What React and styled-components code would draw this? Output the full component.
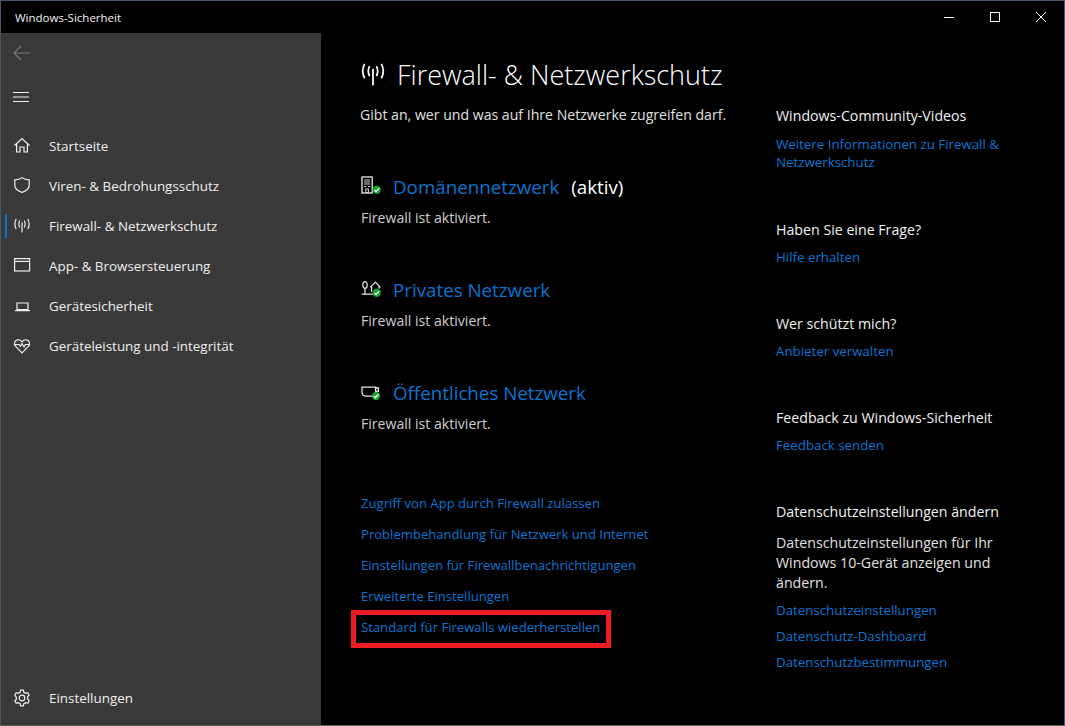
import React from "react";
import styled, { createGlobalStyle } from "styled-components";

const Global = createGlobalStyle`
  html, body { margin: 0; padding: 0; background: #000; }
  body { font-family: "Open Sans", "Noto Sans", sans-serif; }
`;
const Win = styled.div`
  width: 1065px; height: 726px; box-sizing: border-box; display: flex; flex-direction: column;
  background: #000; color: #fff; overflow: hidden;
  border: 1px solid #4a5869; border-bottom-color: #5a5a5a;
`;
const TitleBar = styled.div`
  height: 32px; flex: none; display: flex; align-items: center; justify-content: space-between;
  padding-left: 14px; font-size: 11.5px; color: #f2f2f2;
`;
const Controls = styled.div`display: flex; align-items: center; color: #fff;`;
const Control = styled.div`width: 46px; height: 32px; display: flex; align-items: center; justify-content: center;`;
const Body = styled.div`flex: 1; display: flex; min-height: 0;`;
const Side = styled.nav`
  width: 320px; flex: none; background: #393939; display: flex; flex-direction: column; color: #f0f0f0;
`;
const TopIcon = styled.div`
  height: 40px; display: flex; align-items: center; padding-left: 12px; color: ${p => p.$dim ? "#7a7a7a" : "#f0f0f0"};
  margin-top: ${p => p.$mt || 0}px;
`;
const NavList = styled.div`margin-top: 9px; display: flex; flex-direction: column;`;
const NavItem = styled.div`
  height: 40px; display: flex; align-items: center; position: relative; padding-left: 12px; font-size: 13.4px; gap: 18px;
  ${p => p.$active && `&::before { content: ""; position: absolute; left: 4px; top: 8px; width: 2px; height: 24px; background: #0a74d0; }`}
`;
const NavIcon = styled.span`width: 18px; height: 18px; flex: none; display: flex;`;
const SideFoot = styled.div`margin-top: auto; margin-bottom: 7px;`;
const Main = styled.main`flex: 1; display: flex; min-width: 0;`;
const Center = styled.section`width: 454px; flex: none; padding: 22px 0 0 39px; box-sizing: border-box;`;
const TitleRow = styled.div`display: flex; align-items: center; height: 38px; gap: 11px;`;
const Title = styled.h1`margin: 0; font-size: 27px; font-weight: 300; color: #fff; white-space: nowrap;`;
const Subtitle = styled.p`margin: 12px 0 0; font-size: 14.1px; line-height: 20px; height: 20px; color: #e0e0e0; white-space: nowrap;`;
const Network = styled.div`margin-top: ${p => p.$mt}px;`;
const NetHead = styled.div`display: flex; align-items: center; height: 30px; padding-left: 1px; gap: 12px;`;
const NetIcon = styled.span`width: 20px; height: 20px; flex: none; display: flex;`;
const NetName = styled.span`font-size: 18.75px; color: #0a74d0; white-space: nowrap;`;
const NetState = styled.span`font-size: 18.75px; color: #fff; white-space: nowrap;`;
const NetSub = styled.div`font-size: 14.1px; line-height: 20px; margin-top: 7px; padding-left: 1px; color: #cfcfcf;`;
const Links = styled.div`margin-top: 54px; display: flex; flex-direction: column; padding-left: 1px;`;
const Lnk = styled.a`font-size: 13.1px; line-height: 31px; height: 31px; color: #0a74d0; white-space: nowrap; position: relative; display: block;`;
const Highlight = styled.span`
  position: absolute; left: -10px; top: -2px; width: 250px; height: 28px; border: 5px solid #ed1c24; box-sizing: content-box;
`;
const Right = styled.aside`flex: 1; padding: 73px 0 0 1px; min-width: 0;`;
const Group = styled.div`margin-bottom: ${p => p.$mb}px;`;
const GroupTitle = styled.h2`margin: 0 0 ${p => p.$mb ?? 8}px; font-size: 14.2px; line-height: 20px; font-weight: 400; color: #f2f2f2; white-space: nowrap;`;
const RLink = styled.a`display: block; font-size: 13.3px; line-height: ${p => p.$lh || 18}px; color: #0a74d0; white-space: nowrap;`;
const Para = styled.p`margin: 0 0 4px; font-size: 14.2px; line-height: 20px; color: #e0e0e0; white-space: nowrap;`;

const S = { fill: "none", stroke: "currentColor", strokeWidth: 1.2 };
const Antenna = ({ size = 18 }) => (
  <svg width={size} height={size} viewBox="0 0 18 18" {...S}>
    <path d={size > 18 ? "M9 5.5V17" : "M9 5.5V15.5"} />
    <path d="M6.6 3.6C5.4 6 5.4 8 6.6 10.4M11.4 3.6C12.6 6 12.6 8 11.4 10.4" />
    <path d="M3.2 2C1.4 5.4 1.4 8.6 3.2 12M14.8 2C16.6 5.4 16.6 8.6 14.8 12" />
  </svg>
);
const Check = ({ x, y }) => (
  <g>
    <circle cx={x} cy={y} r="4.2" fill="#16a02c" stroke="none" />
    <path d={`M${x - 2.2} ${y + .2}L${x - .6} ${y + 1.8}L${x + 2.4} ${y - 1.6}`} fill="none" stroke="#fff" strokeWidth="1.4" />
  </g>
);

const icons = {
  home: <svg width="18" height="18" viewBox="0 0 18 18" {...S}><path d="M1.5 8.5L9 1.5L16.5 8.5M3.6 7V15H7V10H11V15H14.4V7" /></svg>,
  shield: <svg width="18" height="18" viewBox="0 0 18 18" {...S}><path d="M9 .6C7 2.3 4.5 2.9 1.8 2.9V8C1.8 11.6 4.8 14 9 15.4C13.2 14 16.2 11.6 16.2 8V2.9C13.5 2.9 11 2.3 9 .6Z" /></svg>,
  antenna: <Antenna />,
  browser: <svg width="18" height="18" viewBox="0 0 18 18" {...S}><rect x="1.6" y="1.6" width="15" height="12.4" /><path d="M1.6 4.4H16.6" /></svg>,
  laptop: <svg width="18" height="18" viewBox="0 0 18 18" {...S}><path d="M4 6H15V12.5H4ZM2 13.6H17" /></svg>,
  heart: <svg width="18" height="18" viewBox="0 0 18 18" {...S}><path d="M9 15.8L2.4 9.2C0.6 7 1.4 3.4 4.6 2.8C6.4 2.5 8 3.4 9 4.8C10 3.4 11.6 2.5 13.4 2.8C16.6 3.4 17.4 7 15.6 9.2Z" /><path d="M1.2 7.5H6L7.4 9.2L9 6.6L11 9.8L12.4 7.5H16.8" /></svg>,
  gear: <svg width="18" height="18" viewBox="0 0 18 18" {...S}><circle cx="9" cy="9" r="2.8" /><path d="M7.6 1.2H10.4L10.9 3.3L12.7 4.3L14.8 3.7L16.2 6.1L14.7 7.6V9.8L16.2 11.9L14.8 14.3L12.7 13.7L10.9 14.7L10.4 16.8H7.6L7.1 14.7L5.3 13.7L3.2 14.3L1.8 11.9L3.3 10.4V8.2L1.8 6.1L3.2 3.7L5.3 4.3L7.1 3.3Z" /></svg>,
};
const nav = [
  ["home", "Startseite"], ["shield", "Viren- & Bedrohungsschutz"], ["antenna", "Firewall- & Netzwerkschutz", true],
  ["browser", "App- & Browsersteuerung"], ["laptop", "Gerätesicherheit"], ["heart", "Geräteleistung und -integrität"],
];
const DomainIcon = () => (
  <NetIcon><svg width="20" height="20" viewBox="0 0 20 20" fill="none">
    <rect x="1" y="1" width="10.2" height="16" fill="#000" stroke="#fff" strokeWidth="1.2" />
    <path d="M3 4H9.2M3 6H9.2M3 8H9.2M3 10.5H5.2M7 10.5H9.2M4.8 13H7.4V16.5H4.8Z" stroke="#d0d0d0" strokeWidth="1.1" />
    <Check x={15.7} y={13.7} />
  </svg></NetIcon>
);
const PrivateIcon = () => (
  <NetIcon><svg width="20" height="20" viewBox="0 0 20 20" fill="none" stroke="#e8e8e8" strokeWidth="1.2">
    <ellipse cx="4" cy="6" rx="2.2" ry="3.4" /><path d="M4 9.5V15M.8 15.2H12" />
    <path d="M9.2 8.4L14.4 3.2L19.4 8.4M10.6 7.4V13M18 7.4V9.5" />
    <Check x={15.7} y={13.7} />
  </svg></NetIcon>
);
const PublicIcon = () => (
  <NetIcon><svg width="20" height="20" viewBox="0 0 20 20" fill="none" stroke="#e8e8e8" strokeWidth="1.3">
    <path d="M1 5.2H14.6V10C14.6 12.6 13 14.2 10.5 14.2H5C2.6 14.2 1 12.6 1 10Z" /><path d="M14.6 6H17.4V9.4H15" />
    <Check x={15} y={14} />
  </svg></NetIcon>
);

export default function App() {
  return (
    <Win>
      <Global />
      <TitleBar>
        <span>Windows-Sicherheit</span>
        <Controls>
          <Control><svg width="10" height="10" viewBox="0 0 10 10"><path d="M0 5.5H10" stroke="#fff" /></svg></Control>
          <Control><svg width="10" height="10" viewBox="0 0 10 10"><rect x=".5" y=".5" width="9" height="9" fill="none" stroke="#fff" /></svg></Control>
          <Control><svg width="10" height="10" viewBox="0 0 10 10"><path d="M0 0L10 10M10 0L0 10" stroke="#fff" /></svg></Control>
        </Controls>
      </TitleBar>
      <Body>
        <Side>
          <TopIcon $dim>
            <svg width="17" height="16" viewBox="0 0 17 16" fill="none" stroke="currentColor" strokeWidth="1.2"><path d="M8 .8L1 8L8 15.2M1 8H17" /></svg>
          </TopIcon>
          <TopIcon $mt={4}>
            <svg width="16" height="10" viewBox="0 0 16 10" stroke="currentColor"><path d="M0 .5H16M0 5H16M0 9.5H16" /></svg>
          </TopIcon>
          <NavList>
            {nav.map(([k, t, a]) => (
              <NavItem key={k} $active={a}><NavIcon>{icons[k]}</NavIcon><span>{t}</span></NavItem>
            ))}
          </NavList>
          <SideFoot>
            <NavItem><NavIcon>{icons.gear}</NavIcon><span>Einstellungen</span></NavItem>
          </SideFoot>
        </Side>
        <Main>
          <Center>
            <TitleRow><Antenna size={26} /><Title>Firewall- &amp; Netzwerkschutz</Title></TitleRow>
            <Subtitle>Gibt an, wer und was auf Ihre Netzwerke zugreifen darf.</Subtitle>
            <Network $mt={46}>
              <NetHead><DomainIcon /><NetName>Domänennetzwerk</NetName><NetState>(aktiv)</NetState></NetHead>
              <NetSub>Firewall ist aktiviert.</NetSub>
            </Network>
            <Network $mt={46}>
              <NetHead><PrivateIcon /><NetName>Privates Netzwerk</NetName></NetHead>
              <NetSub>Firewall ist aktiviert.</NetSub>
            </Network>
            <Network $mt={46}>
              <NetHead><PublicIcon /><NetName>Öffentliches Netzwerk</NetName></NetHead>
              <NetSub>Firewall ist aktiviert.</NetSub>
            </Network>
            <Links>
              <Lnk>Zugriff von App durch Firewall zulassen</Lnk>
              <Lnk>Problembehandlung für Netzwerk und Internet</Lnk>
              <Lnk>Einstellungen für Firewallbenachrichtigungen</Lnk>
              <Lnk>Erweiterte Einstellungen</Lnk>
              <Lnk>Standard für Firewalls wiederherstellen<Highlight /></Lnk>
            </Links>
          </Center>
          <Right>
            <Group $mb={49}>
              <GroupTitle $mb={9}>Windows-Community-Videos</GroupTitle>
              <RLink>Weitere Informationen zu Firewall &amp;<br />Netzwerkschutz</RLink>
            </Group>
            <Group $mb={48}>
              <GroupTitle>Haben Sie eine Frage?</GroupTitle>
              <RLink>Hilfe erhalten</RLink>
            </Group>
            <Group $mb={48}>
              <GroupTitle>Wer schützt mich?</GroupTitle>
              <RLink>Anbieter verwalten</RLink>
            </Group>
            <Group $mb={48}>
              <GroupTitle>Feedback zu Windows-Sicherheit</GroupTitle>
              <RLink>Feedback senden</RLink>
            </Group>
            <Group $mb={0}>
              <GroupTitle $mb={11}>Datenschutzeinstellungen ändern</GroupTitle>
              <Para>Datenschutzeinstellungen für Ihr<br />Windows 10-Gerät anzeigen und<br />ändern.</Para>
              <RLink $lh={26}>Datenschutzeinstellungen</RLink>
              <RLink $lh={26}>Datenschutz-Dashboard</RLink>
              <RLink $lh={26}>Datenschutzbestimmungen</RLink>
            </Group>
          </Right>
        </Main>
      </Body>
    </Win>
  );
}
